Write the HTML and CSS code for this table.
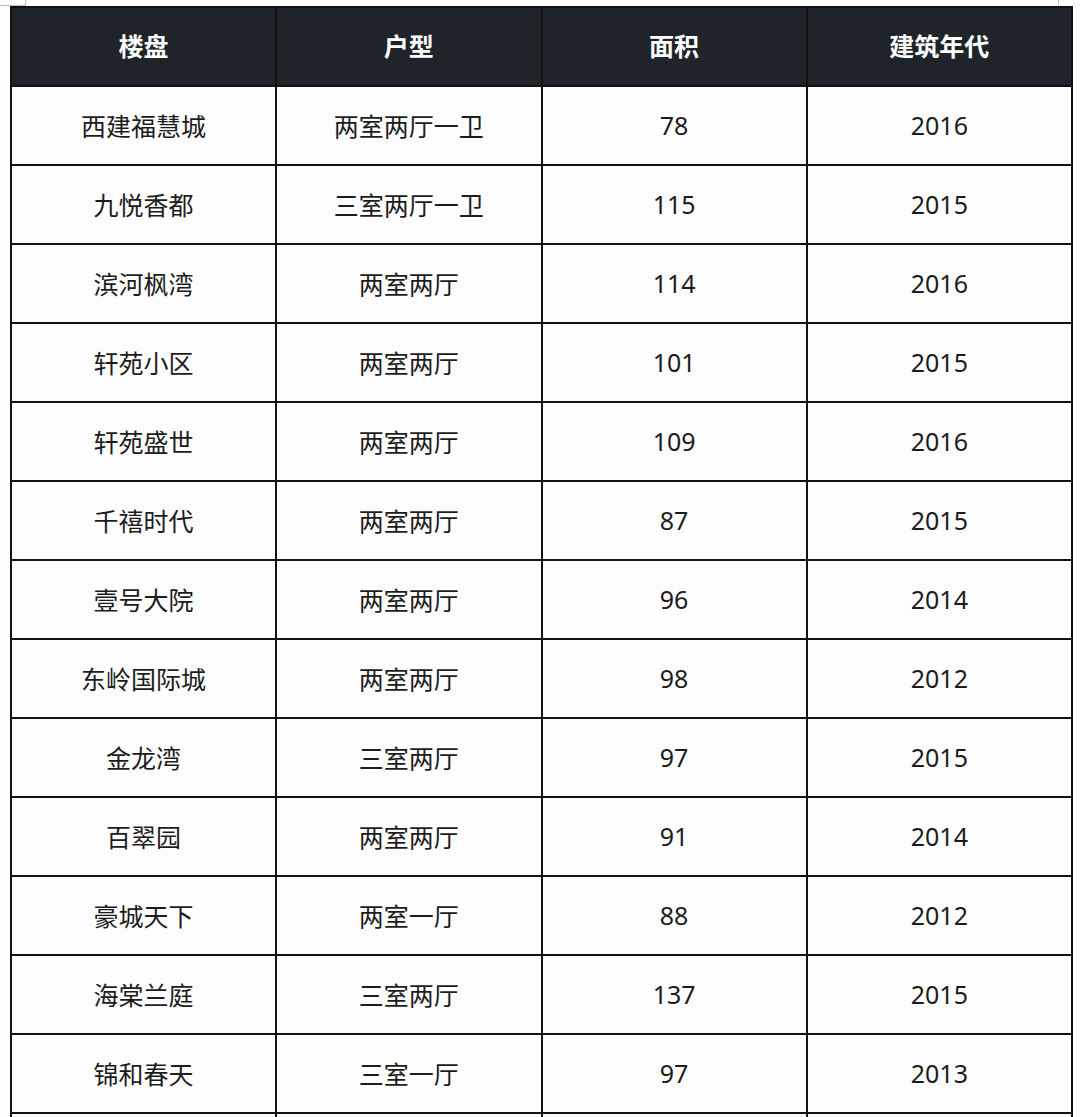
FILE: index.html
```html
<!DOCTYPE html>
<html lang="zh">
<head>
<meta charset="utf-8">
<link rel="stylesheet" href="styles.css">
</head>
<body>
<div class="page">
  <span class="corner corner-left"></span>
  <span class="corner corner-right"></span>
  <table class="grid">
    <thead>
      <tr><th>楼盘</th><th>户型</th><th>面积</th><th>建筑年代</th></tr>
    </thead>
    <tbody>
      <tr><td>西建福慧城</td><td>两室两厅一卫</td><td>78</td><td>2016</td></tr>
      <tr><td>九悦香都</td><td>三室两厅一卫</td><td>115</td><td>2015</td></tr>
      <tr><td>滨河枫湾</td><td>两室两厅</td><td>114</td><td>2016</td></tr>
      <tr><td>轩苑小区</td><td>两室两厅</td><td>101</td><td>2015</td></tr>
      <tr><td>轩苑盛世</td><td>两室两厅</td><td>109</td><td>2016</td></tr>
      <tr><td>千禧时代</td><td>两室两厅</td><td>87</td><td>2015</td></tr>
      <tr><td>壹号大院</td><td>两室两厅</td><td>96</td><td>2014</td></tr>
      <tr><td>东岭国际城</td><td>两室两厅</td><td>98</td><td>2012</td></tr>
      <tr><td>金龙湾</td><td>三室两厅</td><td>97</td><td>2015</td></tr>
      <tr><td>百翠园</td><td>两室两厅</td><td>91</td><td>2014</td></tr>
      <tr><td>豪城天下</td><td>两室一厅</td><td>88</td><td>2012</td></tr>
      <tr><td>海棠兰庭</td><td>三室两厅</td><td>137</td><td>2015</td></tr>
      <tr><td>锦和春天</td><td>三室一厅</td><td>97</td><td>2013</td></tr>
      <tr><td>&nbsp;</td><td>&nbsp;</td><td>&nbsp;</td><td>&nbsp;</td></tr>
    </tbody>
  </table>
</div>
</body>
</html>
```
FILE: styles.css
```css
html, body {
  margin: 0;
  padding: 0;
  background: #fdfdfd;
  overflow: hidden;
  height: 1117px;
}
body {
  font-family: "Noto Sans", "Noto Sans CJK SC", sans-serif;
  color: #1c1c1c;
}
.page {
  position: relative;
  padding: 6px 0 0 10px;
  height: 1117px;
  box-sizing: border-box;
  overflow: hidden;
}
.corner {
  position: absolute;
  top: 0;
  width: 0;
  height: 5px;
  border-left: 1px solid #bdbdbd;
}
.corner-left { left: 25px; }
.corner-left::after {
  content: "";
  position: absolute;
  left: -26px;
  top: 5px;
  width: 26px;
  border-top: 1px solid #bdbdbd;
}
.corner-right { left: 1058px; }
.grid {
  border-collapse: collapse;
  width: 1063px;
  table-layout: fixed;
}
.grid th, .grid td {
  border: 2px solid #121212;
  text-align: center;
  vertical-align: middle;
  padding: 0;
  font-size: 25px;
}
.grid th {
  background: #1f242b;
  color: #ffffff;
  font-weight: 700;
  height: 74px;
  padding-bottom: 3px;
  font-family: "Noto Sans CJK SC", sans-serif;
}
.grid td {
  height: 75px;
  padding-bottom: 2px;
  background: #fdfdfd;
}
```
